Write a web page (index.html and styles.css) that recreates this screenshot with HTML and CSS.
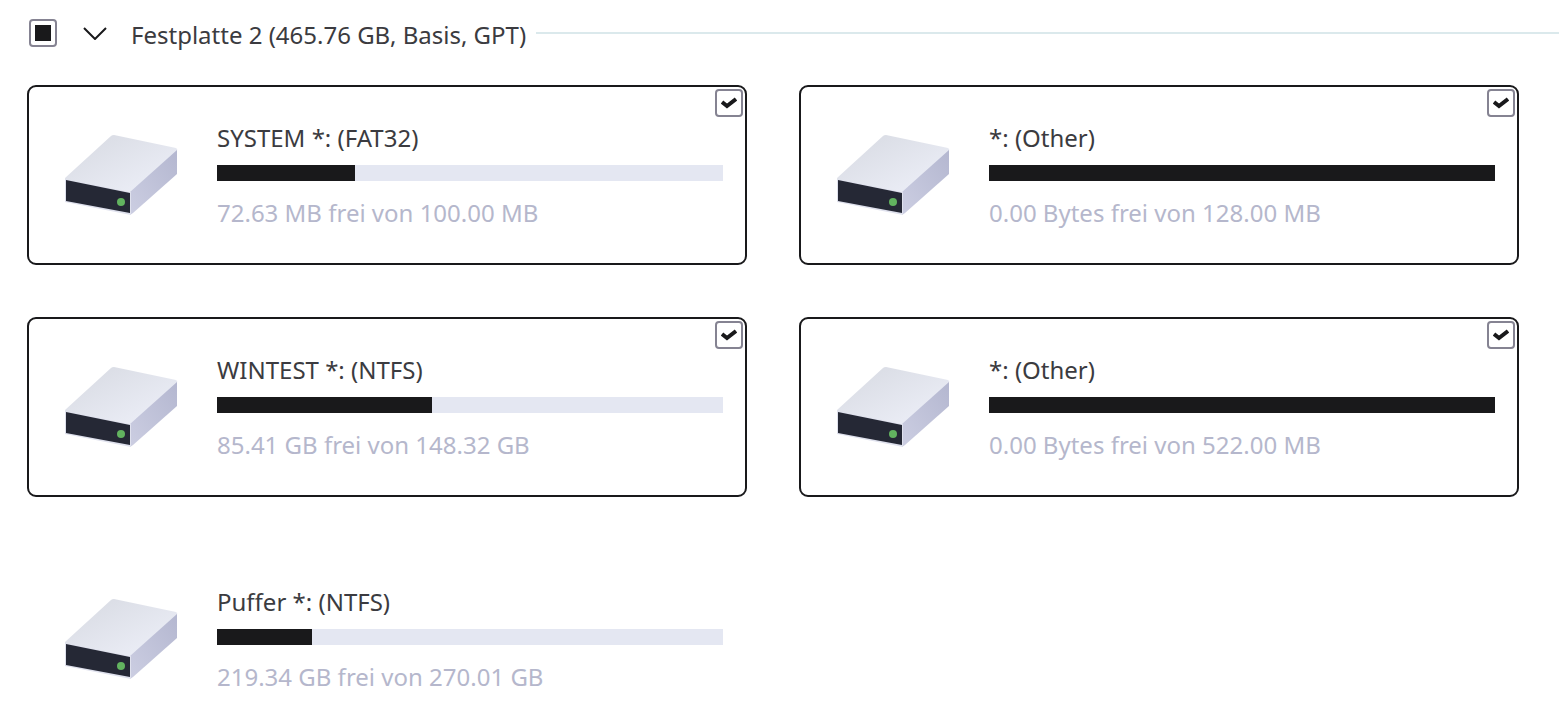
FILE: index.html
```
<!DOCTYPE html>
<html lang="de">
<head>
  <meta charset="UTF-8">
  <meta name="viewport" content="width=device-width, initial-scale=1.0">
  <title>Festplatte 2</title>
  <link rel="stylesheet" href="styles.css">
</head>
<body>

<!-- drive icon, shared by all partitions -->
<svg class="sprite" width="0" height="0" aria-hidden="true">
  <defs>
    <linearGradient id="top-face" x1="0" y1="0" x2="1" y2="1">
      <stop offset="0" stop-color="#d6d9e1"/>
      <stop offset="1" stop-color="#eff1fa"/>
    </linearGradient>
    <linearGradient id="side-face" x1="1" y1="0" x2="0" y2="1">
      <stop offset="0" stop-color="#b4b7d0"/>
      <stop offset="1" stop-color="#cccee2"/>
    </linearGradient>
  </defs>
  <symbol id="drive" viewBox="0 0 116 84">
    <path d="M1 45 47 3Q48 2 50 2L112 15Q114 16 113 18L67 59 1 47Z" fill="url(#top-face)"/>
    <path d="M66 59 113 17V41L69 80 66 82Z" fill="url(#side-face)"/>
    <path d="M1 46 67 59V82L1 69Z" fill="#dfe1ed"/>
    <path d="M2 47 66 60V80L2 68Z" fill="#252835"/>
    <circle cx="57" cy="69" r="4" fill="#62b35f"/>
  </symbol>
</svg>

<div class="disk-header">
  <input type="checkbox" class="check partial" aria-label="Festplatte 2 auswählen">
  <button class="toggle" aria-label="Einklappen">
    <svg width="24" height="14" viewBox="0 0 24 14"><path d="M1 2 12 13 23 2" fill="none" stroke="#19191b" stroke-width="2"/></svg>
  </button>
  <h1>Festplatte 2 (465.76 GB, Basis, GPT)</h1>
  <hr>
</div>

<div class="partitions">
  <div class="card">
    <input type="checkbox" class="check" id="p1" checked>
    <svg class="drive"><use href="#drive"/></svg>
    <div class="info">
      <label for="p1">SYSTEM *: (FAT32)</label>
      <progress value="27.37" max="100" aria-label="Belegt"></progress>
      <p>72.63 MB frei von 100.00 MB</p>
    </div>
  </div>

  <div class="card">
    <input type="checkbox" class="check" id="p2" checked>
    <svg class="drive"><use href="#drive"/></svg>
    <div class="info">
      <label for="p2">*: (Other)</label>
      <progress value="128" max="128" aria-label="Belegt"></progress>
      <p>0.00 Bytes frei von 128.00 MB</p>
    </div>
  </div>

  <div class="card">
    <input type="checkbox" class="check" id="p3" checked>
    <svg class="drive"><use href="#drive"/></svg>
    <div class="info">
      <label for="p3">WINTEST *: (NTFS)</label>
      <progress value="62.91" max="148.32" aria-label="Belegt"></progress>
      <p>85.41 GB frei von 148.32 GB</p>
    </div>
  </div>

  <div class="card">
    <input type="checkbox" class="check" id="p4" checked>
    <svg class="drive"><use href="#drive"/></svg>
    <div class="info">
      <label for="p4">*: (Other)</label>
      <progress value="522" max="522" aria-label="Belegt"></progress>
      <p>0.00 Bytes frei von 522.00 MB</p>
    </div>
  </div>

  <div class="card plain">
    <svg class="drive"><use href="#drive"/></svg>
    <div class="info">
      <h2>Puffer *: (NTFS)</h2>
      <progress value="50.67" max="270.01" aria-label="Belegt"></progress>
      <p>219.34 GB frei von 270.01 GB</p>
    </div>
  </div>
</div>

</body>
</html>
```
FILE: styles.css
```
* {
  box-sizing: border-box;
}
body {
  margin: 0;
  font-family: "Noto Sans", "Open Sans", sans-serif;
  font-size: 24px;
  line-height: 34px;
  background-color: #fff;
  color: #3b3b40;
}
h1, h2, p {
  margin: 0;
  font-size: inherit;
  font-weight: normal;
}
.sprite {
  position: absolute;
}
.disk-header {
  display: flex;
  align-items: center;
  padding: 14px 0 33px 29px;
}
.disk-header h1 {
  padding-top: 4px;
}
.disk-header hr {
  flex: 1;
  height: 2px;
  margin: 0 0 0 10px;
  border: none;
  background-color: #dbe9ec;
}
.toggle {
  display: flex;
  margin: 0 24px 0 26px;
  padding: 0;
  border: none;
  background: none;
  cursor: pointer;
}
.check {
  appearance: none;
  width: 28px;
  height: 28px;
  margin: 0;
  border: 2px solid #858392;
  border-radius: 4px;
  background: #fff center no-repeat;
}
.check:checked {
  background-image: url("data:image/svg+xml,%3Csvg xmlns='http://www.w3.org/2000/svg' width='16' height='12'%3E%3Cpath d='M1 5 6 9 15 2' fill='none' stroke='%2319191b' stroke-width='4'/%3E%3C/svg%3E");
}
.check.partial {
  background-image: linear-gradient(#19191b, #19191b);
  background-size: 16px 16px;
}
.partitions {
  display: grid;
  grid-template-columns: 1fr 1fr;
  gap: 52px;
  padding: 0 40px 0 27px;
}
.card {
  position: relative;
  display: flex;
  gap: 37px;
  padding: 34px 22px 33px 35px;
  border: 2px solid #19191b;
  border-radius: 9px;
}
.card .check {
  position: absolute;
  top: 2px;
  right: 2px;
}
.card.plain {
  border-color: transparent;
  padding-bottom: 0;
}
.drive {
  flex: none;
  width: 116px;
  height: 84px;
  margin-top: 12px;
}
.info {
  display: flex;
  flex: 1;
  flex-direction: column;
}
progress {
  appearance: none;
  width: 100%;
  height: 16px;
  margin: 10px 0 15px;
  border: none;
}
progress::-webkit-progress-bar {
  background-color: #e4e7f2;
}
progress::-webkit-progress-value {
  background-color: #19191b;
}
.info p {
  color: #b5b7cc;
}
```
